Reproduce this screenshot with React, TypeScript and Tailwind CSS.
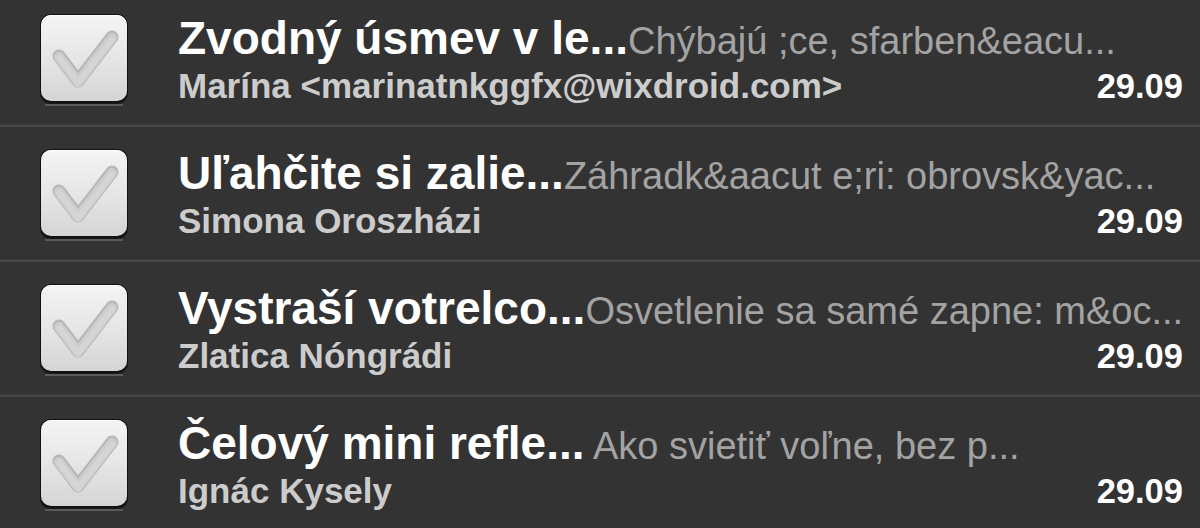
import React from "react";

type Mail = { title: string; preview: string; sender: string; date: string };

const mails: Mail[] = [
  {
    title: "Zvodný úsmev v le...",
    preview: "Chýbajú ;ce, sfarben&eacu...",
    sender: "Marína <marinatnkggfx@wixdroid.com>",
    date: "29.09",
  },
  {
    title: "Uľahčite si zalie...",
    preview: "Záhradk&aacut e;ri: obrovsk&yac...",
    sender: "Simona Oroszházi",
    date: "29.09",
  },
  {
    title: "Vystraší votrelco...",
    preview: "Osvetlenie sa samé zapne: m&oc...",
    sender: "Zlatica Nóngrádi",
    date: "29.09",
  },
  {
    title: "Čelový mini refle...",
    preview: " Ako svietiť voľne, bez p...",
    sender: "Ignác Kysely",
    date: "29.09",
  },
];

function CheckBox() {
  return (
    <div className="relative h-[92px] w-[88px] shrink-0">
      <div className="h-[88px] w-[88px] rounded-[11px] bg-[#111] p-[1px] shadow-[0_2px_1px_rgba(0,0,0,0.6)]">
        <div className="h-full w-full rounded-[10px] bg-gradient-to-b from-[#f4f4f4] via-[#e6e6e6] to-[#d5d5d5] shadow-[inset_0_1px_0_#ffffff]">
          <svg width="86" height="86" viewBox="0 0 86 86" className="block">
            <path
              d="M18 41 L37 66 L71 22"
              fill="none"
              stroke="#b8b8b8"
              strokeWidth="13"
              strokeLinecap="round"
              strokeLinejoin="round"
            />
            <path
              d="M18 42 L37 67 L71 23"
              fill="none"
              stroke="#cdcdcd"
              strokeWidth="10"
              strokeLinecap="round"
              strokeLinejoin="round"
            />
            <path
              d="M18.5 43 L37 68 L71 24.5"
              fill="none"
              stroke="#d5d5d5"
              strokeWidth="6"
              strokeLinecap="round"
              strokeLinejoin="round"
            />
          </svg>
        </div>
      </div>
      <div className="absolute bottom-0 left-[5px] h-[2px] w-[78px] bg-[#5a5a5a]" />
    </div>
  );
}

function Row({ m }: { m: Mail }) {
  return (
    <div className="flex h-[132px] items-start pl-[40px] pr-[17px] pt-[22px]">
      <CheckBox />
      <div className="ml-[50px] flex min-w-0 flex-1 flex-col -mt-[2px]">
        <div className="whitespace-nowrap text-[46px] leading-[52px]">
          <span className="font-bold text-white">{m.title}</span>
          <span className="text-[38px] text-[#a3a3a3]">{m.preview}</span>
        </div>
        <div className="flex items-baseline justify-between text-[35px] font-bold leading-[38px]">
          <span className="text-[#cccccc]">{m.sender}</span>
          <span className="text-[34.5px] text-white">{m.date}</span>
        </div>
      </div>
    </div>
  );
}

export default function App() {
  return (
    <div
      className="h-[528px] w-[1200px] overflow-hidden bg-[#333333]"
      style={{ fontFamily: '"Liberation Sans", Arial, sans-serif' }}
    >
      <div className="-mt-[8px] flex flex-col">
        {mails.map((m, i) => (
          <React.Fragment key={i}>
            <Row m={m} />
            {i < mails.length - 1 && (
              <div className="h-[3px] border-t border-[#3c3c3c] bg-[#474747]" />
            )}
          </React.Fragment>
        ))}
      </div>
    </div>
  );
}
